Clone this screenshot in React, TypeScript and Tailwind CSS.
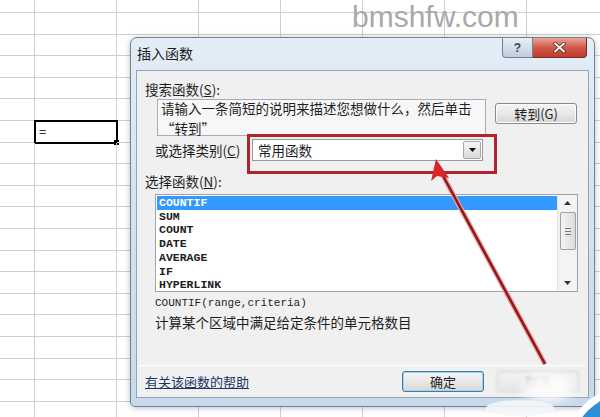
import React from 'react';

const CJK = "font-['Noto_Sans_CJK_SC','Noto_Sans',sans-serif]";
const MONO = "font-['Liberation_Mono','DejaVu_Sans_Mono',monospace]";

const functions = ['COUNTIF', 'SUM', 'COUNT', 'DATE', 'AVERAGE', 'IF', 'HYPERLINK'];

// spreadsheet behind the dialog
const Sheet: React.FC = () => {
  const cells = [];
  for (let r = 0; r < 20; r++) {
    for (let c = 0; c < 8; c++) {
      const active = r === 6 && c === 1;
      cells.push(
        <div key={`${r}-${c}`} className="relative border-r border-b border-[#cfcfcf]">
          {active && (
            <div className="absolute -left-px -top-px w-[84px] h-[24px] border-2 border-black">
              <span className={`absolute left-[3px] top-[1px] text-[13px] leading-[18px] text-black ${CJK}`}>=</span>
              <span className="absolute -right-[3px] -bottom-[3px] w-[5px] h-[5px] bg-black" />
            </div>
          )}
        </div>
      );
    }
  }
  return (
    <div className="grid grid-cols-[35px_repeat(7,82px)] grid-rows-[13px_repeat(19,21.6px)] w-[609px]">
      {cells}
    </div>
  );
};

const WinButton: React.FC<{ label: string; primary?: boolean; className?: string }> = ({ label, primary, className = '' }) => (
  <div
    className={`flex items-center justify-center w-[82px] h-[21px] rounded-[3px] border ${
      primary ? 'border-[#3d7ba8] shadow-[inset_0_0_0_1px_#9fd3f0]' : 'border-[#8a8a8a] shadow-[inset_0_0_0_1px_#fcfcfc]'
    } bg-gradient-to-b from-[#f4f4f4] via-[#e9e9e9] to-[#d6d6d6] text-[13px] text-[#1e1e1e] ${CJK} ${className}`}
  >
    {label}
  </div>
);

const Dialog: React.FC = () => (
  <div className="absolute left-[130px] top-[37px] w-[465px] h-[370px] rounded-t-[7px] rounded-b-[5px] border border-[#6f8296] bg-gradient-to-b from-[#e3edf7] via-[#d3e2f1] to-[#c8d9eb] shadow-[0_1px_6px_rgba(0,0,0,0.25)]">
    {/* title bar */}
    <div className="flex h-[32px] pl-[6px] pr-[7px]">
      <span className={`self-center -mt-[1px] text-[14px] text-[#1c1c1c] ${CJK}`}>插入函数</span>
      <div className="ml-auto flex self-start">
        <div className="flex items-center justify-center w-[31px] h-[20px] rounded-bl-[4px] border border-t-0 border-[#6f7f90] bg-gradient-to-b from-[#e8eef5] to-[#bfcedd] text-[12px] font-bold text-[#3b4a5a] font-['Liberation_Sans',sans-serif]">
          ?
        </div>
        <div className="flex items-center justify-center w-[54px] h-[20px] rounded-br-[4px] border border-t-0 border-l-0 border-[#7a2b22] bg-gradient-to-b from-[#e9a597] via-[#d0584a] to-[#c23a2b]">
          <svg width="13" height="11" viewBox="0 0 13 11">
            <path d="M2 1.5 L11 9.5 M11 1.5 L2 9.5" stroke="#4a1a14" strokeWidth="3.4" strokeLinecap="round" />
            <path d="M2 1.5 L11 9.5 M11 1.5 L2 9.5" stroke="#ffffff" strokeWidth="2" strokeLinecap="round" />
          </svg>
        </div>
      </div>
    </div>

    {/* client area */}
    <div className={`mx-[5px] h-[328px] border border-[#90a3b8] bg-[#f0f0f0] text-[13.5px] text-[#1e1e1e] ${CJK}`}>
      <div className="ml-[8px] mt-[10px] h-[17px] leading-[17px]">
        搜索函数(<span className="underline">S</span>):
      </div>

      <div className="flex mt-px">
        <div className="ml-[20px] w-[329px] h-[37px] border border-[#a5acb5] bg-[#f7f7f7] px-[3px] leading-[19.5px]">
          <div className="-mt-[1px]">请输入一条简短的说明来描述您想做什么，然后单击</div>
          <div>“转到”</div>
        </div>
        <WinButton label="转到(G)" className="ml-[9px] mt-[4px] h-[20px]" />
      </div>

      <div className="flex items-start -mt-[2px]">
        <span className="ml-[18px] mt-[8px] w-[92px] leading-[17px]">
          或选择类别(<span className="underline">C</span>)
        </span>
        <div className="w-[250px] h-[40px] border-[3px] border-[#b3232d] pl-[2px] pt-[2px]">
          <div className="flex w-[231px] h-[22px] border border-[#9a9a9a] bg-white">
            <span className="pl-[5px] leading-[20px]">常用函数</span>
            <div className="ml-auto m-[1px] flex items-center justify-center w-[18px] border border-[#a8a8a8] rounded-[2px] bg-gradient-to-b from-[#f6f6f6] to-[#d8d8d8]">
              <svg width="7" height="4" viewBox="0 0 7 4">
                <path d="M0 0 H7 L3.5 4 Z" fill="#111" />
              </svg>
            </div>
          </div>
        </div>
      </div>

      <div className="ml-[8px] -mt-[1px] h-[17px] leading-[17px]">
        选择函数(<span className="underline">N</span>):
      </div>

      {/* function list */}
      <div className="flex ml-[18px] mt-[4px] w-[423px] h-[98px] border border-[#9ca3ab] bg-white">
        <div className={`flex-1 pt-[1px] pl-px text-[11.5px] font-bold leading-[13.7px] text-[#202020] ${MONO}`}>
          {functions.map((fn, i) => (
            <div key={fn} className={`pl-[2px] ${i === 0 ? 'bg-[#3399ff] text-white' : ''}`}>
              {fn}
            </div>
          ))}
        </div>
        <div className="flex flex-col items-center w-[20px] bg-[#f3f3f3] border-l border-[#e4e4e4]">
          <svg className="mt-[6px]" width="7" height="4" viewBox="0 0 7 4">
            <path d="M0 4 H7 L3.5 0 Z" fill="#333" />
          </svg>
          <div className="mt-[7px] flex flex-col items-center justify-center gap-[2px] w-[16px] h-[38px] rounded-[2px] border border-[#9aa2ac] bg-gradient-to-r from-[#f4f4f4] to-[#dcdcdc]">
            <span className="w-[6px] h-px bg-[#777]" />
            <span className="w-[6px] h-px bg-[#777]" />
            <span className="w-[6px] h-px bg-[#777]" />
          </div>
          <svg className="mt-auto mb-[6px]" width="7" height="4" viewBox="0 0 7 4">
            <path d="M0 0 H7 L3.5 4 Z" fill="#333" />
          </svg>
        </div>
      </div>

      <div className={`ml-[18px] mt-[3px] text-[11px] leading-[16px] text-[#1e1e1e] ${MONO}`}>COUNTIF(range,criteria)</div>
      <div className="ml-[18px] mt-[3px] leading-[17px]">计算某个区域中满足给定条件的单元格数目</div>

      <div className="mt-[34px] mx-[2px] h-px bg-[#d5d5d5] border-b border-white" />

      <div className="flex items-center mt-[5px] h-[21px]">
        <span className="ml-[8px] text-[13px] underline text-[#1d3466]">有关该函数的帮助</span>
        <WinButton label="确定" primary className="ml-auto" />
        <WinButton label="取消" className="ml-[13px] mr-[9px] opacity-40 blur-[1.5px]" />
      </div>
    </div>
  </div>
);

export default function App() {
  return (
    <div className="relative w-[600px] h-[417px] overflow-hidden bg-white">
      <Sheet />

      <span className="absolute left-[352px] top-[2px] text-[30px] leading-[30px] text-[#a9a9a9] font-['Liberation_Sans',sans-serif]">
        bmshfw.com
      </span>

      <Dialog />

      {/* annotation arrow and corner logo */}
      <svg className="absolute left-0 top-0 pointer-events-none" width="600" height="417" viewBox="0 0 600 417">
        <line x1="545" y1="364" x2="441" y2="172" stroke="#f2a0a0" strokeWidth="5" />
        <line x1="545" y1="364" x2="441" y2="172" stroke="#8a1a1c" strokeWidth="2.6" />
        <path d="M436 159 L449 178 L437 176 L431 181 Z" fill="#d8262c" />
        <ellipse cx="548" cy="388" rx="26" ry="14" fill="#ffffff" opacity="0.85" filter="blur(5px)" />
        <ellipse cx="520" cy="408" rx="34" ry="8" fill="#f4f6fa" opacity="0.9" />
        <circle cx="630" cy="452" r="66" fill="#ffffff" />
        <circle cx="630" cy="452" r="59" fill="#2d8fd6" />
      </svg>
    </div>
  );
}
